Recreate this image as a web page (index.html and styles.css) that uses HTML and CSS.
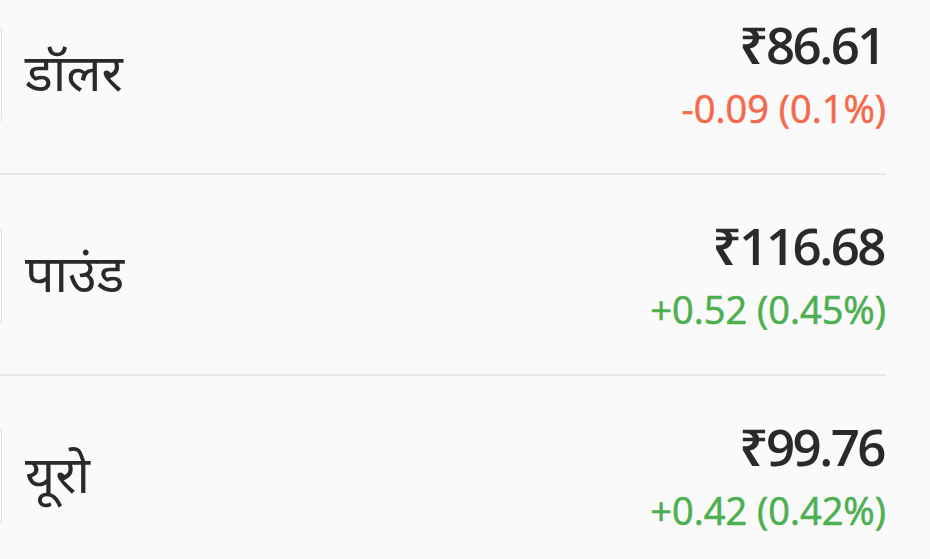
FILE: index.html
```
<!DOCTYPE html>
<html lang="hi">
<head>
<meta charset="utf-8">
<title>मुद्रा</title>
<link rel="stylesheet" href="styles.css">
</head>
<body>
<ul class="rates">
  <li class="rate">
    <div class="flag"></div>
    <div class="name">डॉलर</div>
    <div class="values">
      <div class="price">₹86.61</div>
      <div class="change down">-0.09 (0.1%)</div>
    </div>
  </li>
  <li class="rate">
    <div class="flag"></div>
    <div class="name">पाउंड</div>
    <div class="values">
      <div class="price">₹116.68</div>
      <div class="change up">+0.52 (0.45%)</div>
    </div>
  </li>
  <li class="rate">
    <div class="flag"></div>
    <div class="name">यूरो</div>
    <div class="values">
      <div class="price">₹99.76</div>
      <div class="change up">+0.42 (0.42%)</div>
    </div>
  </li>
</ul>
</body>
</html>
```
FILE: styles.css
```
html, body {
  margin: 0;
  padding: 0;
  background: #fafafa;
  overflow: hidden;
}
body {
  font-family: "Open Sans", "Noto Sans", "Noto Sans Devanagari", sans-serif;
  color: #2a2a2a;
}
.rates {
  list-style: none;
  margin: -26px 44px 0 0;
  padding: 0;
}
.rate {
  display: flex;
  align-items: center;
  height: 199px;
  border-bottom: 2px solid #e7e7e7;
}
.flag {
  flex: none;
  width: 80px;
  height: 102px;
  margin-left: -78px;
  border: 1.5px solid #e0e0e0;
  border-radius: 8px;
  background: #fafafa;
  box-sizing: border-box;
}
.name {
  flex: 1;
  margin-left: 23px;
  font-size: 52px;
  line-height: 60px;
  padding-bottom: 6px;
}
.values {
  display: flex;
  flex-direction: column;
  align-items: flex-end;
  margin-top: 4px;
}
.price {
  font-size: 51px;
  line-height: 60px;
  font-weight: 600;
  letter-spacing: -2.5px;
  margin-right: 2px;
}
.change {
  font-size: 38px;
  line-height: 57px;
  font-weight: 500;
  margin-top: 6px;
  -webkit-text-stroke: 0.6px currentColor;
}
.down { color: #f4694b; }
.up { color: #4caf50; }
```
